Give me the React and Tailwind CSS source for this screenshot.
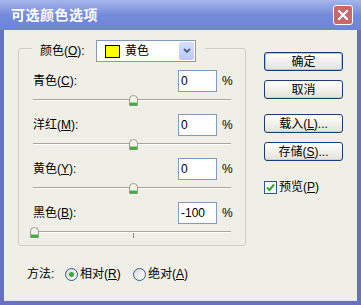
import React from 'react';

const Acc = ({ children }) => <span className="underline underline-offset-[1px]">{children}</span>;

const Thumb = () => (
  <svg width="11" height="12" viewBox="0 0 11 12">
    <path d="M1.5 4 Q1.5 0.5 5.5 0.5 Q9.5 0.5 9.5 4 V10.5 H1.5 Z" fill="#f3f3ee" stroke="#9d9c90" />
    <rect x="2" y="8" width="7" height="2.5" fill="#3fae3f" />
    <rect x="2" y="7" width="7" height="1" fill="#9be09b" />
  </svg>
);

const Slider = ({ pos, tick, last }) => (
  <div className={`relative ${last ? 'h-[20px]' : 'h-[22px]'} ml-[14px] w-[198px]`}>
    <div className="absolute left-0 right-0 top-[7px] h-[2px] border-t border-[#a7a698] bg-white" />
    {tick && <div className="absolute left-[100px] top-[9px] w-px h-[5px] bg-[#8f8e83]" />}
    <div className="absolute top-[3px]" style={{ left: pos }}>
      <Thumb />
    </div>
  </div>
);

const ValueRow = ({ name, acc, value }) => (
  <div className="flex items-center h-[22px] pl-[14px]">
    <span className="w-[145px] text-[12px]">
      {name}(<Acc>{acc}</Acc>):
    </span>
    <div className="w-[39px] h-[22px] bg-white border border-[#7f9db9] flex items-center pl-[2px] text-[12px]">
      {value}
    </div>
    <span className="ml-[5px] text-[12px]">%</span>
  </div>
);

const XpButton = ({ children, def }) => (
  <button
    className={`w-[79px] h-[19px] rounded-[3px] border border-[#1b3d73] bg-gradient-to-b from-white to-[#e4e3d8] text-[12px] leading-none flex items-center justify-center ${
      def ? 'shadow-[inset_0_0_0_1px_#a9c4f0]' : 'shadow-[inset_0_-1px_0_#d6d0c0]'
    }`}
  >
    {children}
  </button>
);

const Radio = ({ checked }) => (
  <span className="w-[13px] h-[13px] rounded-full border border-[#2f5a8c] bg-gradient-to-br from-[#dcdcd4] to-white flex items-center justify-center">
    {checked && <span className="w-[5px] h-[5px] rounded-full bg-[#3aa63a]" />}
  </span>
);

export default function App() {
  return (
    <div className="w-[361px] h-[305px] flex flex-col bg-[#6770c6] text-black font-['Liberation_Sans','Noto_Sans_CJK_SC',sans-serif]">
      {/* title bar */}
      <div className="h-[30px] flex items-center justify-between pl-[11px] pr-[8px] bg-gradient-to-b from-[#a6b6ec] via-[#748bda] to-[#6e85d6]">
        <span className="text-white text-[14px] font-semibold tracking-[0.5px]">可选颜色选项</span>
        <div className="w-[20px] h-[20px] rounded-[3px] border border-white bg-[#c8686a] flex items-center justify-center">
          <svg width="12" height="12" viewBox="0 0 12 12">
            <path d="M2 2 L10 10 M10 2 L2 10" stroke="white" strokeWidth="2.2" strokeLinecap="round" />
          </svg>
        </div>
      </div>

      {/* body */}
      <div className="flex-1 mx-[4px] mb-[4px] bg-[#f0efe7] flex border-b border-[#dfe3f5]">
        <div className="w-[245px] pl-[14px] pt-[18px]">
          <div className="w-[228px] h-[198px] border border-[#cfcebf] rounded-[3px]">
            <div className="-mt-[9px] ml-[13px] w-[173px] pl-[8px] pr-[9px] bg-[#f0efe7] flex items-center h-[22px]">
              <span className="w-[56px] text-[12px]">
                颜色(<Acc>O</Acc>):
              </span>
              <div className="w-[100px] h-[22px] bg-white border border-[#7f9db9] flex items-center">
                <span className="ml-[8px] w-[15px] h-[13px] bg-[#ffff00] border border-black" />
                <span className="ml-[5px] flex-1 text-[12px]">黄色</span>
                <span className="w-[15px] h-[18px] mr-px rounded-[2px] bg-gradient-to-b from-[#d3e0fb] to-[#b6cbf7] flex items-center justify-center">
                  <svg width="8" height="6" viewBox="0 0 8 6">
                    <path d="M1 1 L4 4 L7 1" stroke="#4d6185" strokeWidth="1.8" fill="none" />
                  </svg>
                </span>
              </div>
            </div>

            <div className="mt-[8px]">
              <ValueRow name="青色" acc="C" value="0" />
              <Slider pos="95px" />
              <ValueRow name="洋红" acc="M" value="0" />
              <Slider pos="95px" />
              <ValueRow name="黄色" acc="Y" value="0" />
              <Slider pos="95px" />
              <ValueRow name="黑色" acc="B" value="-100" />
              <Slider pos="-4px" tick last />
            </div>
          </div>

          <div className="mt-[20px] ml-[9px] flex items-center h-[16px] text-[12px]">
            <span className="w-[38px]">方法:</span>
            <Radio checked />
            <span className="ml-[2px] w-[53px]">
              相对(<Acc>R</Acc>)
            </span>
            <Radio />
            <span className="ml-[2px]">
              绝对(<Acc>A</Acc>)
            </span>
          </div>
        </div>

        <div className="pl-[15px] pt-[22px] flex flex-col">
          <XpButton def>确定</XpButton>
          <div className="mt-[9px]">
            <XpButton>取消</XpButton>
          </div>
          <div className="mt-[15px]">
            <XpButton>
              载入(<Acc>L</Acc>)...
            </XpButton>
          </div>
          <div className="mt-[9px]">
            <XpButton>
              存储(<Acc>S</Acc>)...
            </XpButton>
          </div>
          <div className="mt-[17px] flex items-center text-[12px]">
            <span className="w-[13px] h-[13px] border border-[#2f5a8c] bg-white flex items-center justify-center">
              <svg width="9" height="9" viewBox="0 0 9 9">
                <path d="M1 4.5 L3.5 7 L8 1.5" stroke="#2ea52e" strokeWidth="2" fill="none" />
              </svg>
            </span>
            <span className="ml-[2px]">
              预览(<Acc>P</Acc>)
            </span>
          </div>
        </div>
      </div>
    </div>
  );
}
